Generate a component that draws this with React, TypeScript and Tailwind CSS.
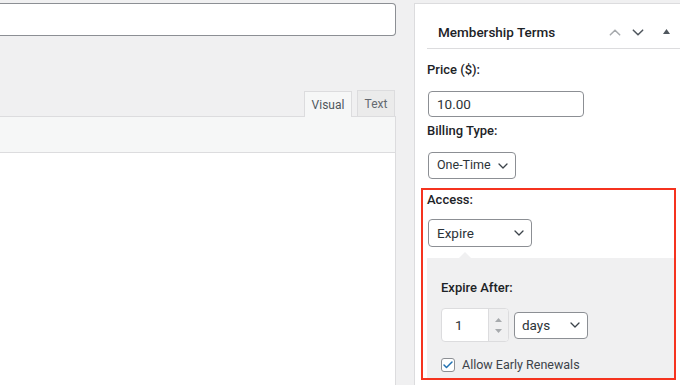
import { Check } from 'lucide-react';

function Chevron({ className }: { className?: string }) {
  return (
    <svg width="10" height="6" viewBox="0 0 10 6" fill="none" className={className}>
      <path d="M1 1l4 4 4-4" stroke="currentColor" strokeWidth="1.3" strokeLinecap="round" strokeLinejoin="round" />
    </svg>
  );
}

function Select({
  label,
  width,
  textPad = 'pl-[8px]',
  height = 'h-[27px]',
  size = 'text-[13.5px]',
}: {
  label: string;
  width: string;
  textPad?: string;
  height?: string;
  size?: string;
}) {
  return (
    <div
      className={`${width} ${height} ${textPad} ${size} pr-[7px] flex items-center justify-between whitespace-nowrap bg-white border border-[#8c8f94] rounded-[4px] text-[#2c3338]`}
    >
      <span>{label}</span>
      <Chevron className="text-[#3c434a]" />
    </div>
  );
}

export default function App() {
  return (
    <div
      className="w-[680px] h-[385px] overflow-hidden bg-[#f0f0f1] flex items-start"
      style={{ fontFamily: 'Roboto, "Liberation Sans", sans-serif' }}
    >
      {/* Editor column */}
      <div className="w-[396px] h-full flex flex-col pt-[3px]">
        <div className="h-[33px] bg-white border border-l-0 border-[#8c8f94] rounded-r-[4px]" />

        <div className="mt-[54px] flex justify-end pr-[1px] gap-[5px] h-[26px]">
          <div className="w-[48px] bg-[#f6f7f7] border border-b-0 border-[#dcdcde] flex items-center justify-center text-[12px] text-[#50575e] relative top-[1px]">
            Visual
          </div>
          <div className="w-[38px] bg-[#ebebeb] border border-b-0 border-[#dcdcde] flex items-center justify-center text-[12px] text-[#646970]">
            Text
          </div>
        </div>

        <div className="h-[37px] bg-[#f6f7f7] border-y border-r border-[#dcdcde]" />
        <div className="flex-1 bg-white border-r border-[#dcdcde]" />
      </div>

      {/* Sidebar panel */}
      <div className="ml-[18px] flex-1 h-full mt-[3px] bg-white border-l border-t border-[#dcdcde] flex flex-col">
        <div className="ml-[12px] h-[45px] border-b border-[#dcdcde] flex items-start pt-[18px] pl-[11px] pr-[10px]">
          <span className="text-[13.5px] leading-[20px] font-medium text-[#1d2327]">Membership Terms</span>
          <div className="ml-auto h-[20px] flex items-center">
            <Chevron className="rotate-180 text-[#a7aaad] w-[12px] h-[7px]" />
            <Chevron className="ml-[11px] text-[#50575e] w-[12px] h-[7px]" />
            <svg width="7" height="5" viewBox="0 0 7 5" className="ml-[19px] mb-[1px]">
              <path d="M0 5L3.5 0 7 5z" fill="#50575e" />
            </svg>
          </div>
        </div>

        <div className="pl-[12px] pr-[4px] flex flex-col">
          <div className="mt-[11px] text-[13px] leading-[20px] font-medium text-[#1d2327]">Price ($):</div>
          <div className="mt-[11px] ml-[1px] w-[156px] h-[26px] bg-white border border-[#8c8f94] rounded-[4px] flex items-center pl-[8px] text-[13.5px] text-[#2c3338]">
            10.00
          </div>

          <div className="mt-[4px] text-[13px] leading-[20px] font-medium text-[#1d2327]">Billing Type:</div>
          <div className="mt-[11px] ml-[1px]">
            <Select label="One-Time" width="w-[88px]" size="text-[12.5px]" />
          </div>
        </div>

        {/* Access (highlighted) */}
        <div className="mt-[9px] ml-[6px] mr-[4px] border-2 border-[#f5331f] flex flex-col">
          <div className="pl-[4px] flex flex-col">
            <div className="text-[13px] leading-[20px] font-medium text-[#1d2327]">Access:</div>
            <div className="mt-[9px] ml-[1px]">
              <Select label="Expire" width="w-[104px]" height="h-[28px]" />
            </div>

            <div className="mt-[11px] relative bg-[#f0f0f1] pl-[14px] pt-[20px] pb-[6px]">
              <div className="absolute -top-[6px] left-[32px] w-0 h-0 border-x-[6px] border-x-transparent border-b-[6px] border-b-[#f0f0f1]" />
              <div className="text-[13px] leading-[20px] font-medium text-[#1d2327]">Expire After:</div>
              <div className="mt-[10px] flex items-center">
                <div className="w-[68px] h-[34px] bg-white border border-[#dcdcde] rounded-[4px] flex overflow-hidden">
                  <div className="flex-1 flex items-center pl-[13px] text-[13.5px] text-[#2c3338]">1</div>
                  <div className="w-[20px] bg-[#f0f0f1] border-l border-[#dcdcde] flex flex-col items-center justify-center gap-[7px]">
                    <svg width="7" height="4" viewBox="0 0 7 4"><path d="M0 4L3.5 0 7 4z" fill="#a7aaad" /></svg>
                    <svg width="7" height="4" viewBox="0 0 7 4"><path d="M0 0L3.5 4 7 0z" fill="#a7aaad" /></svg>
                  </div>
                </div>
                <div className="ml-[5px]">
                  <Select label="days" width="w-[74px]" textPad="pl-[7px]" />
                </div>
              </div>
              <div className="mt-[16px] flex items-center">
                <div className="w-[14px] h-[14px] bg-white border border-[#8c8f94] rounded-[3px] flex items-center justify-center">
                  <Check className="w-[12px] h-[12px] text-[#2271b1]" strokeWidth={3} />
                </div>
                <span className="ml-[7px] text-[12.5px] leading-[14px] text-[#3c434a]">Allow Early Renewals</span>
              </div>
            </div>
          </div>
        </div>
      </div>
    </div>
  );
}
